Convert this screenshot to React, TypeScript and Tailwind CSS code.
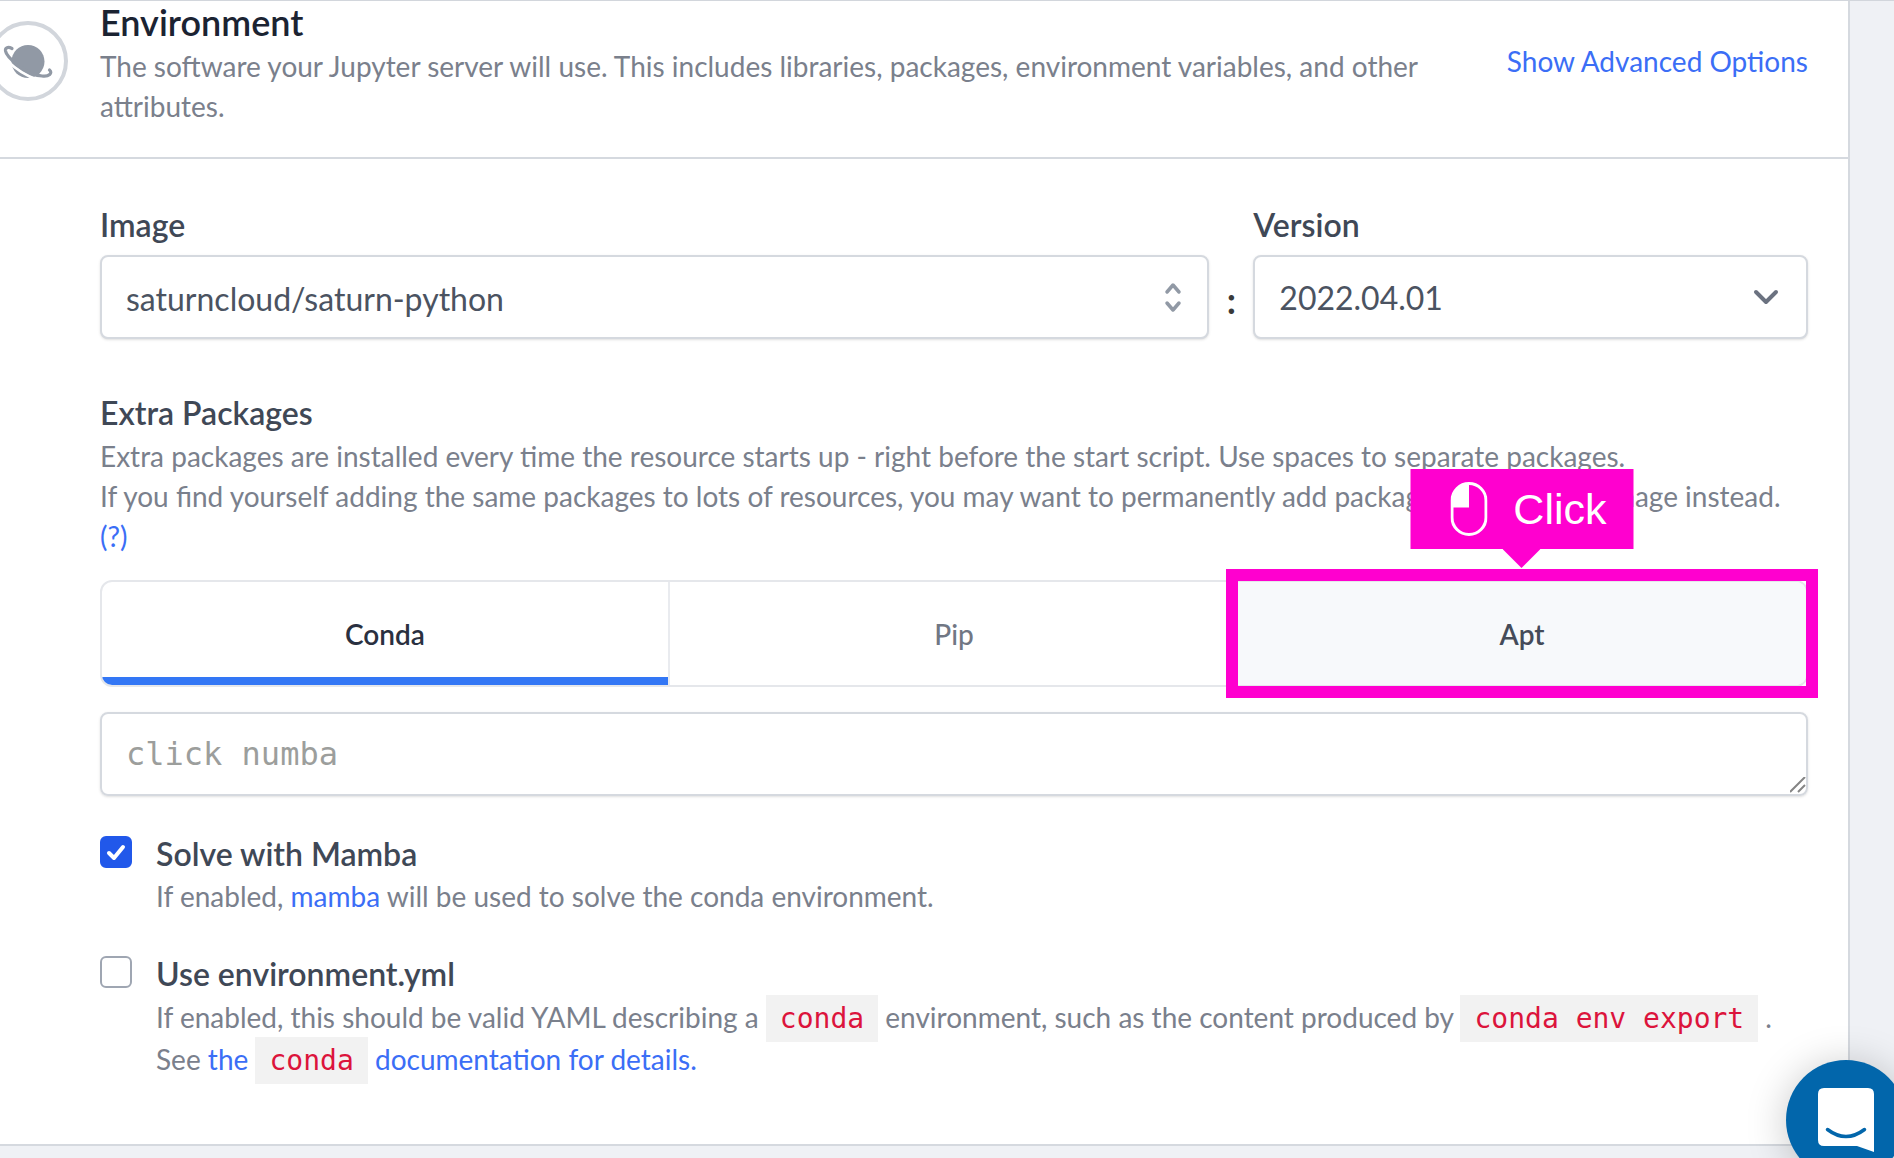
import React from "react";

const link = "text-[#3b6ef6] hover:underline";

function Code({ children }: { children: React.ReactNode }) {
  return (
    <code className="bg-[#f2f2f2] px-3.5 py-[7px] font-['DejaVu_Sans_Mono',monospace] text-[28px] leading-8 text-[#dc143c]">
      {children}
    </code>
  );
}

function PlanetIcon() {
  return (
    <svg className="h-[45px] w-[60px] shrink-0" viewBox="-2 0 60 45" fill="none" strokeLinecap="round">
      <circle cx="28" cy="22.500" r="16.500" fill="#9199a5" />
      <path d="M8 22.500Q21 35 37 40.500" stroke="#fff" strokeWidth="2.500" />
      <path
        d="M12 9.500C8 7.500 5 8.500 5.500 12C6.500 18 26 36 42 37C49 38 53 34 49.500 31"
        stroke="#9199a5"
        strokeWidth="3.200"
      />
    </svg>
  );
}

function Header() {
  return (
    <header className="flex items-start border-b-2 border-[#d5d9df] pb-[31px] pr-10">
      <div className="mr-8 -ml-3 mt-5 flex size-20 shrink-0 items-center justify-center rounded-full border-4 border-[#d2d6dc]">
        <PlanetIcon />
      </div>
      <div className="flex-1">
        <h2 className="text-[36px] font-semibold leading-[42px] text-[#1b2332]">Environment</h2>
        <p className="mt-[3px] max-w-[1340px] text-[28px] leading-10 text-[#7a808c]">
          The software your Jupyter server will use. This includes libraries, packages, environment variables, and other
          attributes.
        </p>
      </div>
      <button type="button" className="mt-10 shrink-0 text-[28px] leading-10 text-[#3b6ef6]">
        Show Advanced Options
      </button>
    </header>
  );
}

function ImageFields() {
  const box =
    "h-[84px] w-full rounded-lg border-2 border-[#d5d9df] bg-white px-6 pt-0.5 text-[32px] text-[#4b5361] shadow-sm outline-none";
  return (
    <div className="flex items-end">
      <div className="flex-2">
        <label htmlFor="image" className="mb-2.5 block text-[32px] font-semibold leading-10 text-[#3f4856]">
          Image
        </label>
        <div className="relative">
          <input id="image" className={box} defaultValue="saturncloud/saturn-python" />
          <svg
            className="pointer-events-none absolute right-[26px] top-[27px] h-8 w-5"
            viewBox="0 0 20 32"
            fill="none"
            stroke="#9199a5"
            strokeWidth="3.5"
            strokeLinecap="round"
            strokeLinejoin="round"
          >
            <path d="M4 10l6-7 6 7M4 21l6 7 6-7" />
          </svg>
        </div>
      </div>
      <span className="w-11 text-center text-[36px] font-bold leading-[78px] text-[#3a3a3a]">:</span>
      <div className="flex-1">
        <label htmlFor="version" className="mb-2.5 block text-[32px] font-semibold leading-10 text-[#3f4856]">
          Version
        </label>
        <div className="relative">
          <select id="version" className={`${box} appearance-none`}>
            <option>2022.04.01</option>
          </select>
          <svg
            className="pointer-events-none absolute right-7 top-8 h-5 w-7"
            viewBox="0 0 28 20"
            fill="none"
            stroke="#6b7280"
            strokeWidth="4"
            strokeLinecap="round"
            strokeLinejoin="round"
          >
            <path d="M4 5l10 10L24 5" />
          </svg>
        </div>
      </div>
    </div>
  );
}

function ClickHint() {
  return (
    <div className="pointer-events-none absolute -bottom-[11px] -right-[10px] -top-[11px] w-[calc(33.333%+23px)] border-12 border-[#ff00cf]">
      <div className="absolute bottom-full left-1/2 mb-8 flex h-20 w-[223px] -translate-x-1/2 items-center bg-[#ff00cf] pl-10">
        <svg className="h-[54px] w-[37px]" viewBox="0 0 37 54">
          <rect x="1.5" y="1.5" width="34" height="51" rx="17" fill="none" stroke="#fff" strokeWidth="3" />
          <path d="M18.500 1.500A17 17 0 0 0 1.500 18.500V25.500H18.500Z" fill="#fff" />
        </svg>
        <span className="ml-[26px] font-['Liberation_Sans',sans-serif] text-[43px] leading-none text-white">Click</span>
        <svg className="absolute left-1/2 top-full h-[19px] w-[38px] -translate-x-1/2" viewBox="0 0 38 19">
          <path d="M0 0H38L19 19Z" fill="#ff00cf" />
        </svg>
      </div>
    </div>
  );
}

function PackageTabs() {
  const tab = "flex items-center justify-center text-[28px]";
  return (
    <div className="relative mt-6">
      <div role="tablist" className="grid h-[107px] grid-cols-3 overflow-hidden rounded-xl border-2 border-[#e5e7eb]">
        <button
          type="button"
          role="tab"
          aria-selected="true"
          className={`${tab} border-r-2 border-r-[#e9ebef] font-semibold text-[#2a3040] shadow-[inset_0_-8px_0_#3377f5]`}
        >
          Conda
        </button>
        <button type="button" role="tab" aria-selected="false" className={`${tab} font-medium text-[#717784]`}>
          Pip
        </button>
        <button type="button" role="tab" aria-selected="false" className={`${tab} bg-[#f7f9fb] font-semibold text-[#444b59]`}>
          Apt
        </button>
      </div>
      <ClickHint />
    </div>
  );
}

function Packages() {
  return (
    <section className="mt-[54px]">
      <h3 className="text-[32px] font-semibold leading-10 text-[#3f4856]">Extra Packages</h3>
      <p className="mt-[3px] text-[28px] leading-10 text-[#7a808c]">
        Extra packages are installed every time the resource starts up - right before the start script. Use spaces to
        separate packages.
        <br />
        If you find yourself adding the same packages to lots of resources, you may want to permanently add packages to
        a custom image instead.{" "}
        <a href="#images" className={link}>
          (?)
        </a>
      </p>
      <PackageTabs />
      <div className="relative mt-[25px]">
        <textarea
          aria-label="Conda packages"
          placeholder="click numba"
          rows={1}
          className="block h-[84px] w-full resize-none rounded-lg border-2 border-[#d5d9df] px-6 py-5 font-['DejaVu_Sans_Mono',monospace] text-[32px] leading-10 shadow-sm outline-none placeholder:text-[#9c9e9c]"
        />
        <svg
          className="pointer-events-none absolute bottom-[3px] right-0.5 size-4"
          viewBox="0 0 16 16"
          fill="none"
          stroke="#858585"
          strokeWidth="2"
        >
          <path d="M0 15L15 0M8 15L15 8" />
        </svg>
      </div>
    </section>
  );
}

function Options() {
  const box =
    "peer size-8 appearance-none rounded-md border-2 border-[#9fa6b2] bg-white checked:border-[#2158ea] checked:bg-[#2158ea]";
  const check = "pointer-events-none absolute inset-0 size-8 opacity-0 peer-checked:opacity-100";
  return (
    <>
      <div className="mt-[38px] flex gap-6">
        <span className="relative mt-0.5 size-8 shrink-0">
          <input id="mamba" type="checkbox" defaultChecked className={box} />
          <svg className={check} viewBox="0 0 32 32" fill="none" stroke="#fff" strokeWidth="4" strokeLinecap="round" strokeLinejoin="round">
            <path d="M9 17l5 5 9-11" />
          </svg>
        </span>
        <div>
          <label htmlFor="mamba" className="block text-[32px] font-semibold leading-10 text-[#3f4856]">
            Solve with Mamba
          </label>
          <p className="mt-0.5 text-[28px] leading-10 text-[#7a808c]">
            If enabled,{" "}
            <a href="#mamba" className={link}>
              mamba
            </a>{" "}
            will be used to solve the conda environment.
          </p>
        </div>
      </div>
      <div className="mt-[38px] flex gap-6">
        <span className="relative mt-0.5 size-8 shrink-0">
          <input id="yml" type="checkbox" className={box} />
        </span>
        <div>
          <label htmlFor="yml" className="block text-[32px] font-semibold leading-10 text-[#3f4856]">
            Use environment.yml
          </label>
          <p className="mt-0.5 text-[28px] leading-[42px] text-[#7a808c]">
            If enabled, this should be valid YAML describing a <Code>conda</Code> environment, such as the content
            produced by <Code>conda env export</Code> .
            <br />
            See{" "}
            <a href="#conda" className={link}>
              the <Code>conda</Code> documentation for details.
            </a>
          </p>
        </div>
      </div>
    </>
  );
}

export default function App() {
  return (
    <div className="min-h-screen overflow-hidden border-t border-[#d2d6dc] bg-[#eff1f5] font-[Lato,sans-serif]">
      <main className="mr-11 border-b-2 border-r-2 border-[#d5d9df] bg-white">
        <Header />
        <div className="pb-16 pl-[100px] pr-10 pt-[46px]">
          <ImageFields />
          <Packages />
          <Options />
        </div>
      </main>
      <button
        type="button"
        aria-label="Open chat"
        className="fixed -bottom-[22px] -right-3 flex size-[120px] items-center justify-center rounded-full bg-[#0266ab] shadow-[0_4px_40px_rgba(0,0,0,0.22)]"
      >
        <svg className="h-16 w-14" viewBox="0 0 56 64">
          <path d="M6 0H50Q56 0 56 6V64L39 58H6Q0 58 0 52V6Q0 0 6 0Z" fill="#fff" />
          <path d="M9.500 41.500Q28 55.500 46.500 41.500" fill="none" stroke="#0266ab" strokeWidth="3.500" strokeLinecap="round" />
        </svg>
      </button>
    </div>
  );
}
